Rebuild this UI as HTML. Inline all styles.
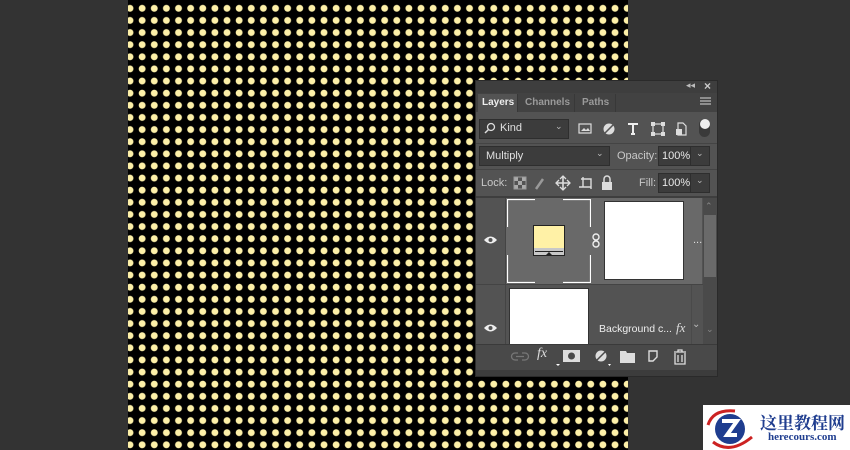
<!DOCTYPE html>
<html><head><meta charset="utf-8"><style>
body{margin:0;width:850px;height:450px;background:#333;position:relative;overflow:hidden;font-family:"Liberation Sans",sans-serif;}
.a{position:absolute;}
.t{position:absolute;font-size:11px;color:#d8d8d8;white-space:nowrap;}
.fld{position:absolute;background:#3c3c3c;border:1px solid #2e2e2e;box-sizing:border-box;}
.ic{position:absolute;}
#dots{position:absolute;left:128px;top:0;width:500px;height:450px;background-color:#000;
background-image:radial-gradient(circle at 6.06px 6.06px,#fdf0a8 3.1px,rgba(0,0,0,0) 3.7px);
background-size:12.13px 12.13px;background-position:-4.06px 2.24px;}
</style></head><body>
<div id="dots"></div>

<!-- panel -->
<div class="a" style="left:475px;top:80px;width:243px;height:297px;background:#535353;border:1px solid #2a2a2a;box-sizing:border-box"></div>
<div class="a" style="left:476px;top:81px;width:241px;height:12px;background:#3e3e3e"></div>
<div class="t" style="left:686px;top:80px;font-size:9px;color:#bbb">◂◂</div>
<div class="t" style="left:704px;top:79px;font-size:12px;color:#ccc;font-weight:bold">×</div>
<div class="a" style="left:476px;top:93px;width:241px;height:19px;background:#424242"></div>
<div class="a" style="left:478px;top:94px;width:39px;height:18px;background:#535353"></div>
<div class="t" style="left:482px;top:97px;font-size:10px;color:#eee;font-weight:bold">Layers</div>
<div class="a" style="left:517px;top:94px;width:1px;height:18px;background:#383838"></div>
<div class="t" style="left:525px;top:97px;font-size:10px;color:#9a9a9a;font-weight:bold">Channels</div>
<div class="a" style="left:574px;top:94px;width:1px;height:18px;background:#383838"></div>
<div class="t" style="left:582px;top:97px;font-size:10px;color:#9a9a9a;font-weight:bold">Paths</div>
<div class="a" style="left:615px;top:94px;width:1px;height:18px;background:#383838"></div>
<svg class="ic" style="left:700px;top:97px" width="11" height="9"><path d="M0 1h11M0 4h11M0 7h11" stroke="#bbb" stroke-width="1.2"/></svg>

<div class="fld" style="left:479px;top:119px;width:90px;height:20px"></div>
<svg class="ic" style="left:484px;top:122px" width="12" height="12"><circle cx="7" cy="5" r="3.5" fill="none" stroke="#ddd" stroke-width="1.3"/><path d="M4.5 7.5L1 11" stroke="#ddd" stroke-width="1.5"/></svg>
<div class="t" style="left:500px;top:122px;color:#e0e0e0">Kind</div>
<div class="t" style="left:555px;top:121px;font-size:9px;color:#bbb">⌄</div>
<svg class="ic" style="left:578px;top:121px" width="120" height="16">
<rect x="1" y="3" width="12" height="9" fill="none" stroke="#ddd" stroke-width="1.2"/><path d="M3 10l3-3 2 2 2-2 2 3z" fill="#ddd"/>
<circle cx="31" cy="8" r="5.5" fill="#ddd"/><path d="M27 12L35 4" stroke="#535353" stroke-width="1.5"/>
<path d="M50 3h10M55 3v10M53 13h4" stroke="#eee" stroke-width="2"/>
<rect x="75" y="3" width="10" height="10" fill="none" stroke="#ddd" stroke-width="1.2"/><g fill="#ddd"><rect x="73" y="1" width="4" height="4"/><rect x="83" y="1" width="4" height="4"/><rect x="73" y="11" width="4" height="4"/><rect x="83" y="11" width="4" height="4"/></g>
<path d="M100 2h5l3 3v9h-8z" fill="none" stroke="#ddd" stroke-width="1.2"/><rect x="98" y="8" width="6" height="6" fill="#ddd"/>
</svg>
<div class="a" style="left:699px;top:119px;width:11px;height:18px;border-radius:6px;background:#3a3a3a"></div>
<div class="a" style="left:700px;top:119px;width:10px;height:10px;border-radius:50%;background:#eee"></div>
<div class="a" style="left:476px;top:143px;width:241px;height:1px;background:#444"></div>

<div class="fld" style="left:479px;top:146px;width:131px;height:20px"></div>
<div class="t" style="left:486px;top:150px;color:#e0e0e0">Multiply</div>
<div class="t" style="left:596px;top:148px;font-size:9px;color:#bbb">⌄</div>
<div class="t" style="left:617px;top:150px;color:#c8c8c8">Opacity:</div>
<div class="fld" style="left:658px;top:146px;width:52px;height:20px"></div>
<div class="a" style="left:690px;top:147px;width:1px;height:18px;background:#2e2e2e"></div>
<div class="t" style="left:662px;top:150px;color:#e8e8e8">100%</div>
<div class="t" style="left:696px;top:148px;font-size:9px;color:#bbb">⌄</div>
<div class="a" style="left:476px;top:169px;width:241px;height:1px;background:#444"></div>

<div class="t" style="left:481px;top:177px;color:#c8c8c8">Lock:</div>
<svg class="ic" style="left:513px;top:175px" width="105" height="16">
<g fill="#aaa"><rect x="1" y="2" width="4" height="4"/><rect x="9" y="2" width="4" height="4"/><rect x="5" y="6" width="4" height="4"/><rect x="1" y="10" width="4" height="4"/><rect x="9" y="10" width="4" height="4"/></g>
<rect x="1" y="2" width="12" height="12" fill="none" stroke="#999"/>
<path d="M23 14l7-10" stroke="#999" stroke-width="2.5"/>
<path d="M50 1v14M43 8h14" stroke="#ddd" stroke-width="1.6"/><path d="M47 4l3-3 3 3M47 12l3 3 3-3M46 5l-3 3 3 3M54 5l3 3-3 3" stroke="#ddd" fill="none" stroke-width="1.3"/>
<path d="M68 4h10v10M66 12h12M70 2v10" stroke="#ddd" fill="none" stroke-width="1.4"/>
<rect x="89" y="7" width="10" height="8" fill="#ddd"/><path d="M91 7V4a3 3 0 0 1 6 0v3" stroke="#ddd" fill="none" stroke-width="1.5"/>
</svg>
<div class="t" style="left:639px;top:177px;color:#c8c8c8">Fill:</div>
<div class="fld" style="left:658px;top:173px;width:52px;height:20px"></div>
<div class="a" style="left:690px;top:174px;width:1px;height:18px;background:#2e2e2e"></div>
<div class="t" style="left:662px;top:177px;color:#e8e8e8">100%</div>
<div class="t" style="left:696px;top:175px;font-size:9px;color:#bbb">⌄</div>
<div class="a" style="left:476px;top:196px;width:241px;height:2px;background:#3e3e3e"></div>

<!-- row1 -->
<div class="a" style="left:506px;top:198px;width:196px;height:86px;background:#696969"></div>
<div class="a" style="left:505px;top:198px;width:1px;height:147px;background:#444"></div>
<svg class="ic" style="left:483px;top:235px" width="15" height="10"><path d="M1 5Q7.5-2 14 5Q7.5 12 1 5z" fill="#eee"/><circle cx="7.5" cy="5" r="2" fill="#535353"/></svg>
<svg class="ic" style="left:507px;top:199px" width="84" height="84" fill="none" stroke="#fff" stroke-width="1.2"><path d="M0.5 28V0.5H28M56 0.5H83.5V28M83.5 56V83.5H56M28 83.5H0.5V56"/></svg>
<div class="a" style="left:533px;top:225px;width:32px;height:31px;border:1px solid #222;box-sizing:border-box;background:#c8c8c8"></div>
<div class="a" style="left:534px;top:226px;width:30px;height:22px;background:#fff1a6"></div>
<div class="a" style="left:535px;top:251px;width:28px;height:1px;background:#222"></div>
<div class="a" style="left:546px;top:252px;width:0;height:0;border-left:3px solid transparent;border-right:3px solid transparent;border-bottom:3px solid #222"></div>
<svg class="ic" style="left:592px;top:233px" width="8" height="15" fill="none" stroke="#eee" stroke-width="1.4"><rect x="1" y="1" width="6" height="6" rx="3"/><rect x="1" y="8" width="6" height="6" rx="3"/></svg>
<div class="a" style="left:604px;top:201px;width:80px;height:79px;background:#fff;border:1px solid #333;box-sizing:border-box"></div>
<div class="t" style="left:693px;top:234px;color:#ddd">...</div>
<div class="a" style="left:703px;top:198px;width:14px;height:147px;background:#4a4a4a"></div>
<div class="t" style="left:705px;top:201px;font-size:9px;color:#888">⌃</div>
<div class="a" style="left:704px;top:215px;width:12px;height:62px;background:#6a6a6a"></div>
<div class="a" style="left:476px;top:284px;width:227px;height:1px;background:#444"></div>
<!-- row2 -->
<svg class="ic" style="left:483px;top:323px" width="15" height="10"><path d="M1 5Q7.5-2 14 5Q7.5 12 1 5z" fill="#eee"/><circle cx="7.5" cy="5" r="2" fill="#535353"/></svg>
<div class="a" style="left:509px;top:288px;width:80px;height:57px;background:#fff;border:1px solid #333;border-bottom:none;box-sizing:border-box"></div>
<div class="t" style="left:599px;top:323px;color:#eee;font-size:10.5px">Background c...</div>
<div class="t" style="left:676px;top:320px;font-style:italic;color:#ddd;font-size:13px;font-family:'Liberation Serif',serif">fx</div>
<div class="t" style="left:692px;top:319px;font-size:10px;color:#bbb">⌄</div>
<div class="a" style="left:691px;top:285px;width:1px;height:60px;background:#4a4a4a"></div>
<div class="t" style="left:706px;top:324px;font-size:9px;color:#888">⌄</div>

<!-- bottom -->
<div class="a" style="left:476px;top:344px;width:241px;height:1px;background:#3a3a3a"></div>
<div class="a" style="left:476px;top:345px;width:241px;height:25px;background:#494949"></div>
<svg class="ic" style="left:510px;top:348px" width="180" height="20">
<path d="M8 5h-3a3.5 3.5 0 0 0 0 7h3M12 5h3a3.5 3.5 0 0 1 0 7h-3M6 8.5h8" stroke="#777" fill="none" stroke-width="1.3"/>
<rect x="53" y="2" width="17" height="12" fill="#ddd"/><circle cx="61.5" cy="8" r="3.5" fill="#494949"/>
<circle cx="91" cy="8" r="5.5" fill="#ddd"/><path d="M87 12L95 4" stroke="#494949" stroke-width="1.5"/><path d="M98 16h3l-1.5 2z" fill="#fff"/>
<path d="M110 3h6l1 2h8v10h-15z" fill="#ddd"/>
<path d="M139 3h8v6l-4 4h-4z" fill="none" stroke="#ddd" stroke-width="1.4"/>
<path d="M164 4h12M168 4v-2h4v2M165 5v11h10V5M168 7v7M172 7v7" stroke="#ddd" fill="none" stroke-width="1.3"/>
</svg>
<div class="t" style="left:537px;top:346px;font-style:italic;color:#ddd;font-size:14px;font-family:'Liberation Serif',serif">fx</div>
<div class="a" style="left:556px;top:364px;width:0;height:0;border-left:2px solid transparent;border-right:2px solid transparent;border-top:2px solid #fff"></div>
<div class="a" style="left:476px;top:370px;width:241px;height:6px;background:#3c3c3c"></div>

<!-- watermark -->
<div class="a" style="left:703px;top:405px;width:147px;height:45px;background:#fff"></div>
<svg class="ic" style="left:705px;top:407px" width="50" height="43">
<path d="M3 18Q8 2 30 4" stroke="#c22" stroke-width="3" fill="none"/>
<path d="M8 35Q25 48 47 30" stroke="#c22" stroke-width="3" fill="none"/>
<circle cx="25" cy="22" r="15" fill="#1f3d8f"/>
<path d="M17 14h15l-10 14h10" stroke="#fff" stroke-width="4" fill="none"/>
</svg>
<div class="t" style="left:760px;top:409px;font-size:17px;font-weight:bold;color:#1f3d8f;font-family:'Liberation Serif','Noto Serif CJK SC',serif">这里教程网</div>
<div class="t" style="left:768px;top:431px;font-size:11px;font-weight:bold;color:#1f3d8f;font-family:'Liberation Serif',serif">herecours.com</div>
</body></html>
